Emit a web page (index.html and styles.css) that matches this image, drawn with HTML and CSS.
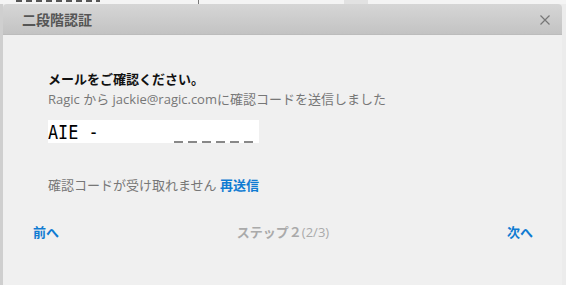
FILE: index.html
```html
<!DOCTYPE html>
<html lang="ja">
<head>
    <meta charset="UTF-8">
    <title>二段階認証</title>
    <link rel="stylesheet" href="styles.css">
</head>
<body>
    <div class="page-strip">
        <span class="strip-mark"></span>
        <span class="strip-line"></span>
        <span class="strip-block"></span>
    </div>
    <div class="dialog">
        <div class="dialog-header">
            <span class="dialog-title">二段階認証</span>
            <svg class="dialog-close" width="10" height="10" viewBox="0 0 10 10">
                <path d="M0.5 0.5L9.5 9.5M9.5 0.5L0.5 9.5" stroke="#777" stroke-width="1.2" fill="none"/>
            </svg>
        </div>
        <div class="dialog-body">
            <p class="heading">メールをご確認ください。</p>
            <p class="sub">Ragic から jackie@ragic.comに確認コードを送信しました</p>
            <div class="code-box">
                <span class="code-prefix">AIE -</span>
                <span class="code-slots">
                    <span></span><span></span><span></span><span></span><span></span><span></span>
                </span>
            </div>
            <p class="resend">確認コードが受け取れません <a href="#" class="link">再送信</a></p>
        </div>
        <div class="dialog-footer">
            <a href="#" class="link">前へ</a>
            <span class="step">ステップ２<span class="step-count">(2/3)</span></span>
            <a href="#" class="link">次へ</a>
        </div>
    </div>
</body>
</html>
```

FILE: styles.css
```css
body {
    margin: 0;
    height: 285px;
    overflow: hidden;
    background: linear-gradient(to right, #cfcfcf 0, #cfcfcf 3px, #ececec 3px);
    font-family: "Open Sans", "Noto Sans CJK JP", sans-serif;
}
.page-strip {
    position: relative;
    height: 4px;
    overflow: hidden;
    background: #f4f4f4;
}
.strip-mark {
    position: absolute;
    left: 16px;
    top: 0;
    width: 84px;
    height: 2px;
    background: repeating-linear-gradient(to right, #555 0 6px, transparent 6px 10px);
}
.strip-line {
    position: absolute;
    left: 198px;
    top: 0;
    width: 1px;
    height: 4px;
    background: #777;
}
.strip-block {
    position: absolute;
    left: 344px;
    top: 0;
    width: 24px;
    height: 4px;
    background: #e2e2e2;
}
.dialog {
    margin-left: 3px;
    width: 559px;
    height: 281px;
    background: #f0f0f0;
    border-radius: 4px 4px 0 0;
    overflow: hidden;
}
.dialog-header {
    display: flex;
    align-items: center;
    justify-content: space-between;
    height: 30px;
    padding: 0 12px 0 19px;
    background: linear-gradient(#d6d6d6, #c3c3c3);
    border-bottom: 1px solid #bcbcbc;
}
.dialog-title {
    font-size: 14px;
    font-weight: bold;
    color: #555;
}
.dialog-close {
    display: block;
    margin-top: 1px;
}
.dialog-body {
    padding: 35px 45px 0;
}
.heading {
    margin: 0;
    font-size: 13px;
    font-weight: bold;
    color: #111;
    line-height: 18px;
}
.sub {
    margin: 2px 0 0;
    font-size: 13px;
    color: #777;
    line-height: 18px;
}
.code-box {
    display: flex;
    align-items: flex-end;
    width: 211px;
    height: 23px;
    margin-top: 12px;
    background: #fff;
}
.code-prefix {
    display: inline-block;
    width: 126px;
    font-family: "DejaVu Sans Mono", monospace;
    font-size: 20px;
    line-height: 22px;
    color: #000;
    transform: scaleX(0.84);
    transform-origin: left center;
    white-space: pre;
}
.code-slots {
    display: flex;
    gap: 5px;
}
.code-slots span {
    width: 9px;
    height: 2px;
    background: #888;
}
.resend {
    margin: 33px 0 0;
    font-size: 13px;
    color: #777;
    line-height: 18px;
}
.link {
    color: #0f7bd2;
    font-weight: bold;
    text-decoration: none;
}
.dialog-footer {
    display: flex;
    justify-content: space-between;
    align-items: center;
    padding: 29px 29px 0 30px;
    font-size: 13px;
    line-height: 18px;
}
.step {
    font-weight: bold;
    color: #aaa;
}
.step-count {
    font-weight: normal;
}
```
